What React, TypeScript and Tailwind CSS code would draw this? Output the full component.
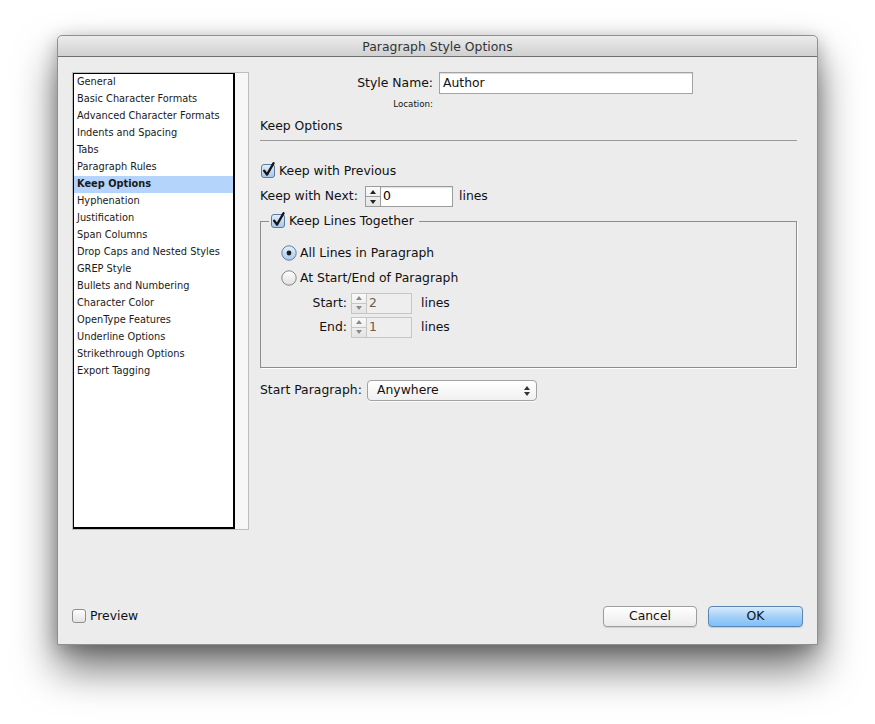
import React from 'react'

// Paragraph Style Options ダイアログ（InDesign / Aqua風）
const SECTIONS = [
  'General',
  'Basic Character Formats',
  'Advanced Character Formats',
  'Indents and Spacing',
  'Tabs',
  'Paragraph Rules',
  'Keep Options',
  'Hyphenation',
  'Justification',
  'Span Columns',
  'Drop Caps and Nested Styles',
  'GREP Style',
  'Bullets and Numbering',
  'Character Color',
  'OpenType Features',
  'Underline Options',
  'Strikethrough Options',
  'Export Tagging',
]

function CheckBox({ checked }: { checked: boolean }) {
  return (
    <svg width="14" height="14" viewBox="0 0 14 14" className="shrink-0 overflow-visible">
      <defs>
        <linearGradient id={checked ? 'cbOn' : 'cbOff'} x1="0" y1="0" x2="0" y2="1">
          <stop offset="0" stopColor={checked ? '#e4eefa' : '#ffffff'} />
          <stop offset="1" stopColor={checked ? '#a8c6e8' : '#e2e2e2'} />
        </linearGradient>
      </defs>
      <rect
        x="0.5"
        y="0.5"
        width="13"
        height="13"
        rx="2.5"
        fill={checked ? 'url(#cbOn)' : 'url(#cbOff)'}
        stroke={checked ? '#5a7aa3' : '#8e8e8e'}
      />
      {checked && (
        <path
          d="M3.2 6.8 L6 10.6 L12.6 -0.8"
          fill="none"
          stroke="#151515"
          strokeWidth="2.3"
          strokeLinecap="round"
          strokeLinejoin="round"
        />
      )}
    </svg>
  )
}

function Radio({ selected }: { selected: boolean }) {
  return (
    <svg width="16" height="16" viewBox="0 0 16 16" className="shrink-0">
      <defs>
        <linearGradient id={selected ? 'rdOn' : 'rdOff'} x1="0" y1="0" x2="0" y2="1">
          <stop offset="0" stopColor={selected ? '#e6f0fb' : '#ffffff'} />
          <stop offset="1" stopColor={selected ? '#a9c8ea' : '#dedede'} />
        </linearGradient>
      </defs>
      <circle
        cx="8"
        cy="8"
        r="7.2"
        fill={selected ? 'url(#rdOn)' : 'url(#rdOff)'}
        stroke={selected ? '#5f7fa8' : '#858585'}
      />
      {selected && <circle cx="8" cy="8" r="2.4" fill="#1c1c1c" />}
    </svg>
  )
}

function Arrow({ up, color }: { up: boolean; color: string }) {
  return (
    <svg width="6" height="4" viewBox="0 0 6 4">
      <path d={up ? 'M0 4 L3 0 L6 4 Z' : 'M0 0 L3 4 L6 0 Z'} fill={color} />
    </svg>
  )
}

// 数値入力欄＋左側のスピナー。disabledのときは灰色表示
function SpinField({ value, width, disabled }: { value: string; width: string; disabled?: boolean }) {
  const border = disabled ? 'border-[#c6c6c6]' : 'border-[#9c9c9c]'
  return (
    <div className="flex h-[21px]">
      <div className={`flex w-[16px] flex-col border ${border} bg-gradient-to-b from-[#fafafa] to-[#e4e4e4]`}>
        <div className={`flex flex-1 items-center justify-center border-b ${border}`}>
          <Arrow up color={disabled ? '#8a8a8a' : '#222'} />
        </div>
        <div className="flex flex-1 items-center justify-center">
          <Arrow up={false} color={disabled ? '#8a8a8a' : '#222'} />
        </div>
      </div>
      <div
        className={`${width} flex items-center border-y border-r ${border} pl-[2px] ${
          disabled ? 'bg-[#eeeeee] text-[#6f5a4a]' : 'bg-white text-black shadow-[inset_0_1px_1px_rgba(0,0,0,0.12)]'
        }`}
      >
        {value}
      </div>
    </div>
  )
}

export default function App() {
  return (
    <div className="h-[724px] w-[875px] bg-white pl-[57px] pt-[35px] font-['DejaVu_Sans',sans-serif] text-[12.4px] text-[#111]">
      <div className="flex h-[610px] w-[761px] flex-col rounded-t-[5px] border border-[#8f8f8f] bg-[#ececec] shadow-[0_24px_42px_rgba(0,0,0,0.55),0_4px_18px_rgba(0,0,0,0.25)]">
        {/* タイトルバー */}
        <div className="flex h-[21px] items-center justify-center rounded-t-[5px] border-b border-[#6e6e6e] bg-gradient-to-b from-[#ececec] to-[#d0d0d0] pt-[2px] text-[#333]">
          Paragraph Style Options
        </div>

        <div className="flex flex-1 flex-col">
          <div className="flex pl-[14px] pt-[14px]">
            {/* 左側のセクション一覧 */}
            <div className="mt-[1px] flex h-[458px] w-[177px] border border-[#bdbdbd]">
              <div className="flex-1 border-b-2 border-l border-r-2 border-t border-black bg-white text-[9.8px] text-[#1a1a1a]">
                {SECTIONS.map((name) => (
                  <div
                    key={name}
                    className={`flex h-[17px] items-center pl-[3px] ${
                      name === 'Keep Options' ? 'bg-[#b5d4fb] font-bold' : ''
                    }`}
                  >
                    {name}
                  </div>
                ))}
              </div>
              <div className="w-[13px] bg-[#f7f7f7]" />
            </div>

            {/* 右側の設定パネル */}
            <div className="ml-[11px] mt-[1px] flex w-[537px] flex-col">
              <div className="flex h-[22px] items-center">
                <div className="w-[173px] text-right">Style Name:</div>
                <div className="ml-[6px] flex h-[22px] w-[254px] items-center border border-[#a3a3a3] bg-white pl-[3px] shadow-[inset_0_1px_1px_rgba(0,0,0,0.15)]">
                  Author
                </div>
              </div>
              <div className="mt-[5px] w-[173px] text-right text-[8.7px] leading-[11px]">Location:</div>
              <div className="mt-[8px] leading-[16px]">Keep Options</div>
              <div className="mt-[6px] h-px bg-[#9b9b9b]" />

              <div className="mt-[22px] flex h-[16px] items-center gap-[4px] pl-[1px]">
                <CheckBox checked />
                <span>Keep with Previous</span>
              </div>

              <div className="mt-[7px] flex h-[21px] items-center">
                <span className="w-[105px]">Keep with Next:</span>
                <SpinField value="0" width="w-[72px]" />
                <span className="ml-[6px]">lines</span>
              </div>

              <fieldset className="mt-[6px] border border-[#8d8d8d] pb-[30px] shadow-[1px_1px_0_#ffffff]">
                <legend className="ml-[8px] flex h-[16px] items-center gap-[4px] pl-[2px] pr-[5px]">
                  <CheckBox checked />
                  <span>Keep Lines Together</span>
                </legend>
                <div className="pl-[20px]">
                  <div className="mt-[16px] flex h-[16px] items-center gap-[3px]">
                    <Radio selected />
                    <span>All Lines in Paragraph</span>
                  </div>
                  <div className="mt-[9px] flex h-[16px] items-center gap-[3px]">
                    <Radio selected={false} />
                    <span>At Start/End of Paragraph</span>
                  </div>
                  <div className="mt-[7px] flex h-[20px] items-center">
                    <span className="w-[66px] text-right">Start:</span>
                    <div className="ml-[4px]">
                      <SpinField value="2" width="w-[45px]" disabled />
                    </div>
                    <span className="ml-[9px]">lines</span>
                  </div>
                  <div className="mt-[4px] flex h-[20px] items-center">
                    <span className="w-[66px] text-right">End:</span>
                    <div className="ml-[4px]">
                      <SpinField value="1" width="w-[45px]" disabled />
                    </div>
                    <span className="ml-[9px]">lines</span>
                  </div>
                </div>
              </fieldset>

              <div className="mt-[12px] flex h-[21px] items-center">
                <span className="w-[107px]">Start Paragraph:</span>
                <div className="flex h-[21px] w-[170px] items-center justify-between rounded-[4px] border border-[#a2a2a2] bg-gradient-to-b from-white to-[#f0f0f0] pl-[9px] pr-[6px] shadow-[0_1px_0_rgba(255,255,255,0.8)]">
                  <span>Anywhere</span>
                  <div className="flex flex-col gap-[2px]">
                    <Arrow up color="#333" />
                    <Arrow up={false} color="#333" />
                  </div>
                </div>
              </div>
            </div>
          </div>

          {/* 下部のボタン行 */}
          <div className="mb-[17px] mt-auto flex h-[21px] items-center justify-between pl-[14px] pr-[14px]">
            <div className="flex items-center gap-[4px]">
              <CheckBox checked={false} />
              <span>Preview</span>
            </div>
            <div className="flex gap-[11px]">
              <button
                type="button"
                className="flex h-[21px] w-[94px] items-center justify-center rounded-[4px] border border-[#9d9d9d] bg-gradient-to-b from-white to-[#ebebeb] shadow-[0_1px_1px_rgba(0,0,0,0.12)]"
              >
                Cancel
              </button>
              <button
                type="button"
                className="flex h-[21px] w-[95px] items-center justify-center rounded-[4px] border border-[#5b86b5] bg-gradient-to-b from-[#d6ebfc] via-[#a5d0f7] to-[#7cc0f7] shadow-[0_1px_1px_rgba(0,0,0,0.15)]"
              >
                OK
              </button>
            </div>
          </div>
        </div>
      </div>
    </div>
  )
}
